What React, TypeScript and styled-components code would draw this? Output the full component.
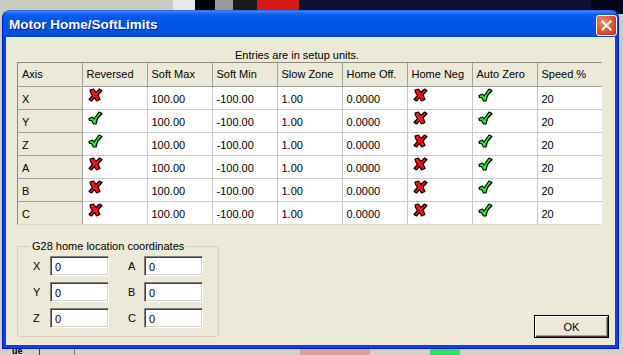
import React from "react";
import styled, { createGlobalStyle } from "styled-components";

type Flag = "yes" | "no";

interface AxisRow {
  axis: string;
  reversed: Flag;
  softMax: string;
  softMin: string;
  slowZone: string;
  homeOff: string;
  homeNeg: Flag;
  autoZero: Flag;
  speed: string;
}

const rows: AxisRow[] = [
  { axis: "X", reversed: "no", softMax: "100.00", softMin: "-100.00", slowZone: "1.00", homeOff: "0.0000", homeNeg: "no", autoZero: "yes", speed: "20" },
  { axis: "Y", reversed: "yes", softMax: "100.00", softMin: "-100.00", slowZone: "1.00", homeOff: "0.0000", homeNeg: "no", autoZero: "yes", speed: "20" },
  { axis: "Z", reversed: "yes", softMax: "100.00", softMin: "-100.00", slowZone: "1.00", homeOff: "0.0000", homeNeg: "no", autoZero: "yes", speed: "20" },
  { axis: "A", reversed: "no", softMax: "100.00", softMin: "-100.00", slowZone: "1.00", homeOff: "0.0000", homeNeg: "no", autoZero: "yes", speed: "20" },
  { axis: "B", reversed: "no", softMax: "100.00", softMin: "-100.00", slowZone: "1.00", homeOff: "0.0000", homeNeg: "no", autoZero: "yes", speed: "20" },
  { axis: "C", reversed: "no", softMax: "100.00", softMin: "-100.00", slowZone: "1.00", homeOff: "0.0000", homeNeg: "no", autoZero: "yes", speed: "20" },
];

const headers = ["Axis", "Reversed", "Soft Max", "Soft Min", "Slow Zone", "Home Off.", "Home Neg", "Auto Zero", "Speed %"];

const coords = [
  ["X", "A"],
  ["Y", "B"],
  ["Z", "C"],
];

// chunky red cross, slightly slanted like the old bitmap
const CrossIcon = () => (
  <svg width="15" height="14" viewBox="0 0 15 14">
    <polygon
      points="2,2 5.5,1 8,4.5 11.5,1 14,2.5 10,7 12,11.5 8.5,13 6.5,9.5 3.5,13 1,11.5 4.5,7.5 2.5,4.5"
      fill="#ff1010"
      stroke="#000"
      strokeWidth="1.2"
      strokeLinejoin="round"
    />
  </svg>
);

const CheckIcon = () => (
  <svg width="15" height="14" viewBox="0 0 15 14">
    <polygon
      points="1,7.5 4.5,6 6,8 11,1 14,2.5 9.5,7.5 8,13 5.5,13 3.5,9.5 1.5,9.5"
      fill="#22ee22"
      stroke="#000"
      strokeWidth="1.2"
      strokeLinejoin="round"
    />
  </svg>
);

const FlagIcon: React.FC<{ value: Flag }> = ({ value }) =>
  value === "yes" ? <CheckIcon /> : <CrossIcon />;

const App: React.FC = () => {
  return (
    <>
      <GlobalStyle />
      <Desktop>
        <BackStrip $left={173} $width={22} $color="#e8e8e8" />
        <BackStrip $left={195} $width={20} $color="#000" />
        <BackStrip $left={215} $width={18} $color="#9a9a9a" />
        <BackStrip $left={233} $width={24} $color="#1a1a1a" />
        <BackStrip $left={257} $width={42} $color="#d81818" />
        <BackStrip $left={299} $width={292} $color="#101034" />
        <BackStrip $left={591} $width={32} $color="#06061a" />
        <BottomStrip>
          <span className="word">ue</span>
          <span className="pane" />
          <span className="pink" />
          <span className="green" />
        </BottomStrip>

        <Window>
          <TitleBar>
            <Title>Motor Home/SoftLimits</Title>
            <CloseButton aria-label="Close">
              <svg width="11" height="11" viewBox="0 0 11 11">
                <path d="M1.5 1.5 L9.5 9.5 M9.5 1.5 L1.5 9.5" stroke="#fff" strokeWidth="2" strokeLinecap="square" />
              </svg>
            </CloseButton>
          </TitleBar>

          <Client>
            <Caption>Entries are in setup units.</Caption>
            <GridFrame>
              <Grid>
                <colgroup>
                  {headers.map((h, i) => (
                    <col key={h} style={{ width: i === 0 ? 64 : 65 }} />
                  ))}
                </colgroup>
                <thead>
                  <tr>
                    {headers.map((h) => (
                      <HeadCell key={h}>{h}</HeadCell>
                    ))}
                  </tr>
                </thead>
                <tbody>
                  {rows.map((r) => (
                    <tr key={r.axis}>
                      <AxisCell>{r.axis}</AxisCell>
                      <IconCell>
                        <FlagIcon value={r.reversed} />
                      </IconCell>
                      <Cell>{r.softMax}</Cell>
                      <Cell>{r.softMin}</Cell>
                      <Cell>{r.slowZone}</Cell>
                      <Cell>{r.homeOff}</Cell>
                      <IconCell>
                        <FlagIcon value={r.homeNeg} />
                      </IconCell>
                      <IconCell>
                        <FlagIcon value={r.autoZero} />
                      </IconCell>
                      <Cell>{r.speed}</Cell>
                    </tr>
                  ))}
                </tbody>
              </Grid>
            </GridFrame>

            <BottomRow>
              <GroupBox>
                <legend>G28 home location coordinates</legend>
                <CoordGrid>
                  {coords.map(([a, b]) => (
                    <React.Fragment key={a}>
                      <CoordLabel>{a}</CoordLabel>
                      <TextBox defaultValue="0" />
                      <CoordLabel $wide>{b}</CoordLabel>
                      <TextBox defaultValue="0" />
                    </React.Fragment>
                  ))}
                </CoordGrid>
              </GroupBox>
              <OkButton>OK</OkButton>
            </BottomRow>
          </Client>
        </Window>
      </Desktop>
    </>
  );
};

const GlobalStyle = createGlobalStyle`
  html, body {
    margin: 0;
    padding: 0;
    background: #c8cebe;
  }
  * {
    box-sizing: border-box;
  }
`;

const Desktop = styled.div`
  position: relative;
  width: 623px;
  height: 355px;
  overflow: hidden;
  background: #c8cebe;
  font-family: "Liberation Sans", Arial, sans-serif;
`;

const BackStrip = styled.div<{ $left: number; $width: number; $color: string }>`
  position: absolute;
  top: 0;
  left: ${(p) => p.$left}px;
  width: ${(p) => p.$width}px;
  height: 14px;
  background: ${(p) => p.$color};
`;

const BottomStrip = styled.div`
  position: absolute;
  left: 0;
  right: 0;
  bottom: 0;
  height: 12px;
  background: #d4d0c8;
  display: flex;
  align-items: flex-end;

  .word {
    width: 40px;
    padding-left: 12px;
    font-weight: bold;
    font-size: 9px;
    line-height: 7px;
    border-right: 1px solid #404040;
    height: 7px;
  }
  .pane {
    width: 35px;
    height: 9px;
    border-right: 1px solid #808080;
  }
  .pink {
    margin-left: 225px;
    width: 70px;
    height: 9px;
    background: #d9a0a0;
  }
  .green {
    margin-left: 60px;
    width: 30px;
    height: 9px;
    background: #30e060;
  }
`;

const Window = styled.div`
  position: absolute;
  left: 2px;
  top: 10px;
  width: 617px;
  height: 339px;
  display: flex;
  flex-direction: column;
  background: #0842d6;
  border-radius: 8px 8px 0 0;
  border: 1px solid #0019cf;
  border-top-color: #2a6cf0;
  padding: 0 3px 3px 3px;
`;

const TitleBar = styled.div`
  height: 26px;
  margin: 0 -3px;
  padding: 0 1px 0 6px;
  display: flex;
  align-items: center;
  justify-content: space-between;
  border-radius: 7px 7px 0 0;
  background: linear-gradient(
    to bottom,
    #3d8cff 0%,
    #0a62f0 12%,
    #0056e6 30%,
    #0054e3 60%,
    #0050dc 85%,
    #0645d0 100%
  );
`;

const Title = styled.span`
  color: #fff;
  font-family: "Liberation Sans", Arial, sans-serif;
  font-weight: bold;
  font-size: 13.5px;
  text-shadow: 1px 1px #0a1e8c;
  margin-top: 1px;
`;

const CloseButton = styled.button`
  width: 21px;
  height: 21px;
  padding: 0;
  margin-top: 2px;
  display: flex;
  align-items: center;
  justify-content: center;
  border: 1px solid #fff;
  border-radius: 3px;
  background: radial-gradient(circle at 35% 30%, #f0906c 0%, #e05a34 45%, #c8401c 100%);
  box-shadow: inset -1px -1px 1px rgba(120, 20, 0, 0.35);
`;

const Client = styled.div`
  flex: 1;
  display: flex;
  flex-direction: column;
  background: #ece9d8;
  padding: 0 12px 0 11px;
  font-size: 11px;
  color: #000;
`;

const Caption = styled.div`
  height: 25px;
  padding: 12px 0 0 218px;
  line-height: 12px;
`;

const GridFrame = styled.div`
  width: 585px;
  border: 1px solid;
  border-color: #8a8a8a #d8d8d8 #d8d8d8 #8a8a8a;
`;

const Grid = styled.table`
  width: 584px;
  table-layout: fixed;
  border-collapse: collapse;
  background: #fff;
`;

const HeadCell = styled.th`
  height: 23px;
  padding: 0 0 0 4px;
  text-align: left;
  font-weight: normal;
  background: #ece9d8;
  border-right: 1px solid #a0a0a0;
  border-bottom: 1px solid #a0a0a0;
  white-space: nowrap;
  &:last-child {
    border-right: none;
  }
`;

const Cell = styled.td`
  height: 23px;
  padding: 2px 0 0 4px;
  border-right: 1px solid #c8c8c8;
  border-bottom: 1px solid #c8c8c8;
  &:last-child {
    border-right: none;
  }
  tr:last-child > & {
    border-bottom: none;
  }
`;

const AxisCell = styled(Cell)`
  background: #ece9d8;
  border-right-color: #a0a0a0;
  border-bottom-color: #a0a0a0;
`;

const IconCell = styled(Cell)`
  vertical-align: top;
  padding: 1px 0 0 5px;
  line-height: 0;
`;

const BottomRow = styled.div`
  display: flex;
  align-items: flex-end;
  justify-content: space-between;
  margin-top: 15px;
`;

const GroupBox = styled.fieldset`
  width: 202px;
  height: 97px;
  margin: 0 0 1px 0;
  padding: 4px 0 0 9px;
  border: 1px solid #d0d0bf;
  border-radius: 3px;

  legend {
    padding: 0 2px;
    margin-left: 3px;
    font-size: 11px;
  }
`;

const CoordGrid = styled.div`
  display: grid;
  grid-template-columns: 23px 59px 35px 59px;
  row-gap: 6px;
  align-items: center;
`;

const CoordLabel = styled.span<{ $wide?: boolean }>`
  padding-left: ${(p) => (p.$wide ? "19px" : "6px")};
`;

const TextBox = styled.input`
  width: 59px;
  height: 20px;
  padding: 1px 0 0 4px;
  font-family: "Liberation Sans", Arial, sans-serif;
  font-size: 11px;
  background: #fff;
  border: 1px solid;
  border-color: #808080 #fff #fff #808080;
  box-shadow: inset 1px 1px #404040, inset -1px -1px #d4d0c8;
  outline: none;
`;

const OkButton = styled.button`
  width: 75px;
  height: 23px;
  margin: 0 -6px 0 0;
  font-family: "Liberation Sans", Arial, sans-serif;
  font-size: 11px;
  color: #000;
  background: #ece9d8;
  border: 1px solid #000;
  box-shadow: inset 1px 1px #fff, inset -1px -1px #404040, inset -2px -2px #a0a0a0;
`;

export default App;
